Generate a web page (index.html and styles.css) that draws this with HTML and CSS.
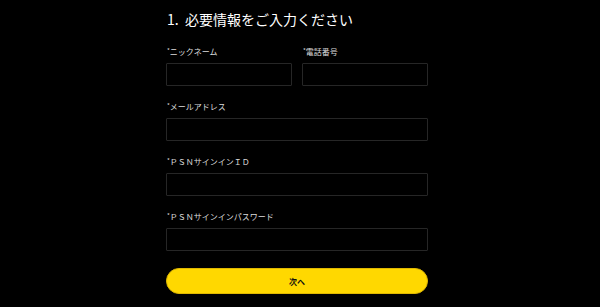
FILE: index.html
```html
<!DOCTYPE html>
<html lang="ja">
<head>
<meta charset="utf-8">
<title>必要情報をご入力ください</title>
<link rel="stylesheet" href="styles.css">
</head>
<body>
<main class="form-wrap">
  <h1 class="title"><span class="num">1.</span>必要情報をご入力ください</h1>
  <div class="row two">
    <div class="field">
      <label class="label"><span class="req">*</span>ニックネーム</label>
      <input class="input" type="text">
    </div>
    <div class="field">
      <label class="label"><span class="req">*</span>電話番号</label>
      <input class="input" type="text">
    </div>
  </div>
  <div class="row">
    <div class="field">
      <label class="label"><span class="req">*</span>メールアドレス</label>
      <input class="input" type="text">
    </div>
  </div>
  <div class="row">
    <div class="field">
      <label class="label"><span class="req">*</span>ＰＳＮサインインＩＤ</label>
      <input class="input" type="text">
    </div>
  </div>
  <div class="row">
    <div class="field">
      <label class="label"><span class="req">*</span>ＰＳＮサインインパスワード</label>
      <input class="input" type="password">
    </div>
  </div>
  <button class="btn" type="button">次へ</button>
</main>
</body>
</html>
```
FILE: styles.css
```css
html, body {
  margin: 0;
  padding: 0;
  background: #000;
  width: 600px;
  height: 307px;
  overflow: hidden;
}
body {
  font-family: "Noto Sans CJK JP", "Liberation Sans", sans-serif;
  color: #fff;
}
.form-wrap {
  width: 262px;
  margin: 0 0 0 166px;
  padding-top: 9px;
  display: flex;
  flex-direction: column;
}
.title {
  margin: 0 0 0 1px;
  font-size: 14px;
  line-height: 20px;
  font-weight: 400;
  color: #fff;
}
.num {
  display: inline-block;
  width: 18px;
}
.row {
  display: flex;
  margin-top: 16px;
}
.row:first-of-type { margin-top: 18px; }
.row.two { gap: 10px; }
.field {
  flex: 1;
  display: flex;
  flex-direction: column;
}
.label {
  font-size: 8px;
  line-height: 10px;
  height: 10px;
  color: #dcdcdc;
  margin: 0 0 6px 1px;
  white-space: nowrap;
}
.req {
  font-size: 6px;
  vertical-align: top;
  line-height: 8px;
}
.input {
  box-sizing: border-box;
  height: 23px;
  width: 100%;
  margin: 0;
  background: #000;
  border: 1px solid #262626;
  border-radius: 1px;
  outline: none;
}
.btn {
  margin-top: 17px;
  height: 26px;
  width: 262px;
  border: 1px solid #e0b800;
  border-radius: 13px;
  background: #ffd800;
  color: #111;
  font-family: "Noto Sans CJK JP", sans-serif;
  font-size: 8px;
  font-weight: 700;
  padding: 0;
}
```
